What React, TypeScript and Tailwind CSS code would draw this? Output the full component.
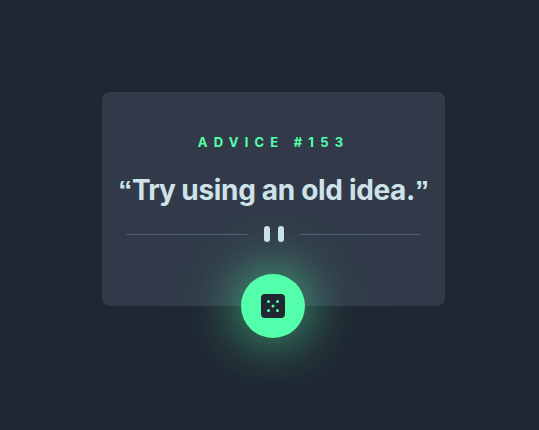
function PauseMark() {
  return (
    <div className="flex w-[295px] items-center justify-between">
      <span className="h-px w-[122px] bg-[#4e5d77]" />
      <span className="flex gap-2">
        <span className="h-4 w-1.5 rounded-full bg-[#cee3e9]" />
        <span className="h-4 w-1.5 rounded-full bg-[#cee3e9]" />
      </span>
      <span className="h-px w-[122px] bg-[#4e5d77]" />
    </div>
  );
}

function DiceIcon() {
  return (
    <svg width="24" height="24" viewBox="0 0 24 24" xmlns="http://www.w3.org/2000/svg">
      <path
        d="M20 0H4a4.005 4.005 0 0 0-4 4v16a4.005 4.005 0 0 0 4 4h16a4.005 4.005 0 0 0 4-4V4a4.005 4.005 0 0 0-4-4ZM7.5 18a1.5 1.5 0 1 1 0-3 1.5 1.5 0 0 1 0 3Zm0-9a1.5 1.5 0 1 1 0-3 1.5 1.5 0 0 1 0 3Zm4.5 4.5a1.5 1.5 0 1 1 0-3 1.5 1.5 0 0 1 0 3Zm4.5 4.5a1.5 1.5 0 1 1 0-3 1.5 1.5 0 0 1 0 3Zm0-9a1.5 1.5 0 1 1 0-3 1.5 1.5 0 0 1 0 3Z"
        fill="#202733"
      />
    </svg>
  );
}

export default function App() {
  return (
    <main className="h-[430px] w-[539px] overflow-hidden bg-[#202632] pl-[102px] pt-[92px] font-['Inter',sans-serif]">
      <section className="flex h-[214px] w-[343px] flex-col items-center rounded-lg bg-[#323a49] pt-10">
        <h1 className="text-[13px] font-bold leading-5 tracking-[6.2px] whitespace-nowrap text-[#53ffaa]">
          ADVICE #153
        </h1>
        <p className="mt-[19px] mb-[17px] text-[28px] font-bold leading-[38px] tracking-[-0.33px] whitespace-nowrap text-[#cee3e9]">
          <span className="font-['Liberation_Sans',sans-serif] leading-none">“</span>
          <span className="tracking-[-0.9px]">Try</span> using an old idea.
          <span className="font-['Liberation_Sans',sans-serif] leading-none">”</span>
        </p>
        <PauseMark />
        <button
          aria-label="New advice"
          className="mt-8 mr-px flex size-16 shrink-0 items-center justify-center rounded-full bg-[#53ffaa] shadow-[0_0_50px_#53ffaa99,0_0_90px_#53ffaa4d]"
        >
          <DiceIcon />
        </button>
      </section>
    </main>
  );
}
